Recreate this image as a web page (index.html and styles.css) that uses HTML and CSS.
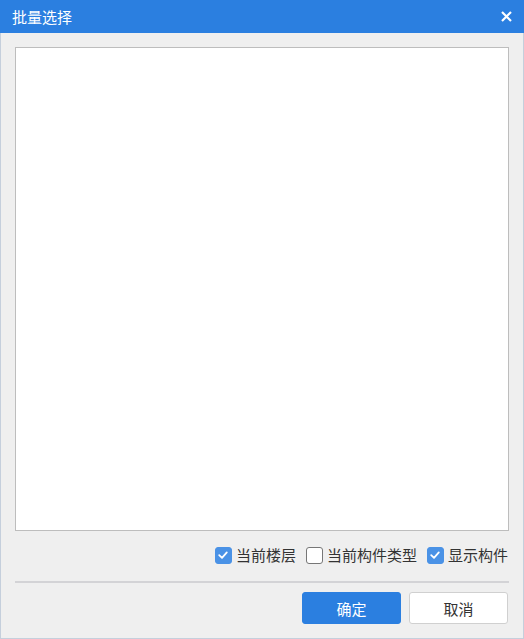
FILE: index.html
```html
<!DOCTYPE html>
<html lang="zh">
<head>
<meta charset="utf-8">
<title>批量选择</title>
<link rel="stylesheet" href="styles.css">
</head>
<body>
<div class="window">
  <div class="titlebar">
    <span class="title">批量选择</span>
    <span class="close">
      <svg width="11" height="11" viewBox="0 0 11 11"><path d="M1 1 L10 10 M10 1 L1 10" stroke="#fff" stroke-width="2.2" fill="none"/></svg>
    </span>
  </div>
  <div class="content">
    <div class="list"></div>
    <div class="checkrow">
      <label class="check">
        <span class="box on"><svg width="12" height="12" viewBox="0 0 12 12"><path d="M2.2 6.2 L5 8.8 L9.8 3.4" stroke="#fff" stroke-width="1.8" fill="none" stroke-linecap="round" stroke-linejoin="round"/></svg></span>
        <span class="label">当前楼层</span>
      </label>
      <label class="check">
        <span class="box"></span>
        <span class="label">当前构件类型</span>
      </label>
      <label class="check">
        <span class="box on"><svg width="12" height="12" viewBox="0 0 12 12"><path d="M2.2 6.2 L5 8.8 L9.8 3.4" stroke="#fff" stroke-width="1.8" fill="none" stroke-linecap="round" stroke-linejoin="round"/></svg></span>
        <span class="label">显示构件</span>
      </label>
    </div>
    <div class="separator"></div>
    <div class="buttons">
      <button class="btn primary">确定</button>
      <button class="btn">取消</button>
    </div>
  </div>
</div>
</body>
</html>
```

FILE: styles.css
```css
html, body {
  margin: 0;
  padding: 0;
}
body {
  font-family: "Noto Sans CJK SC", "Noto Sans", sans-serif;
  color: #333;
  background: #efefef;
}
.window {
  width: 524px;
  height: 639px;
  box-sizing: border-box;
  border-left: 1px solid #c5cfdc;
  border-right: 1px solid #c5cfdc;
  border-bottom: 1px solid #c5cfdc;
  background: #efefef;
  display: flex;
  flex-direction: column;
}
.titlebar {
  height: 33px;
  margin: 0 -1px;
  background: #2b7fe0;
  display: flex;
  align-items: center;
  justify-content: space-between;
  padding: 0 12px 0 12px;
  flex-shrink: 0;
}
.title {
  color: #fff;
  font-size: 15px;
  line-height: 33px;
}
.close {
  display: flex;
  align-items: center;
  width: 11px;
  height: 11px;
}
.content {
  flex: 1;
  display: flex;
  flex-direction: column;
  padding: 14px 14px 0 14px;
}
.list {
  height: 484px;
  box-sizing: border-box;
  background: #fff;
  border: 1px solid #bdbdbd;
}
.checkrow {
  margin-top: 14px;
  height: 20px;
  display: flex;
  justify-content: flex-end;
  align-items: center;
  gap: 10px;
  padding-right: 1px;
}
.check {
  display: flex;
  align-items: center;
  gap: 4px;
  font-size: 15px;
}
.label {
  line-height: 20px;
  color: #333;
}
.box {
  width: 17px;
  height: 17px;
  box-sizing: border-box;
  border-radius: 3px;
  border: 1px solid #777;
  background: #fff;
  display: flex;
  align-items: center;
  justify-content: center;
}
.box.on {
  background: #4a92e6;
  border-color: #4a92e6;
}
.separator {
  margin-top: 16px;
  height: 2px;
  background: #d3d3d6;
}
.buttons {
  margin-top: 9px;
  display: flex;
  justify-content: flex-end;
  gap: 8px;
  padding-right: 1px;
}
.btn {
  width: 99px;
  height: 32px;
  border-radius: 3px;
  border: 1px solid #d0d0d0;
  background: #fff;
  color: #333;
  font-family: "Noto Sans CJK SC", "Noto Sans", sans-serif;
  font-size: 15px;
  padding: 0;
}
.btn.primary {
  background: #2b7fe0;
  border-color: #2b7fe0;
  color: #fff;
}
```
